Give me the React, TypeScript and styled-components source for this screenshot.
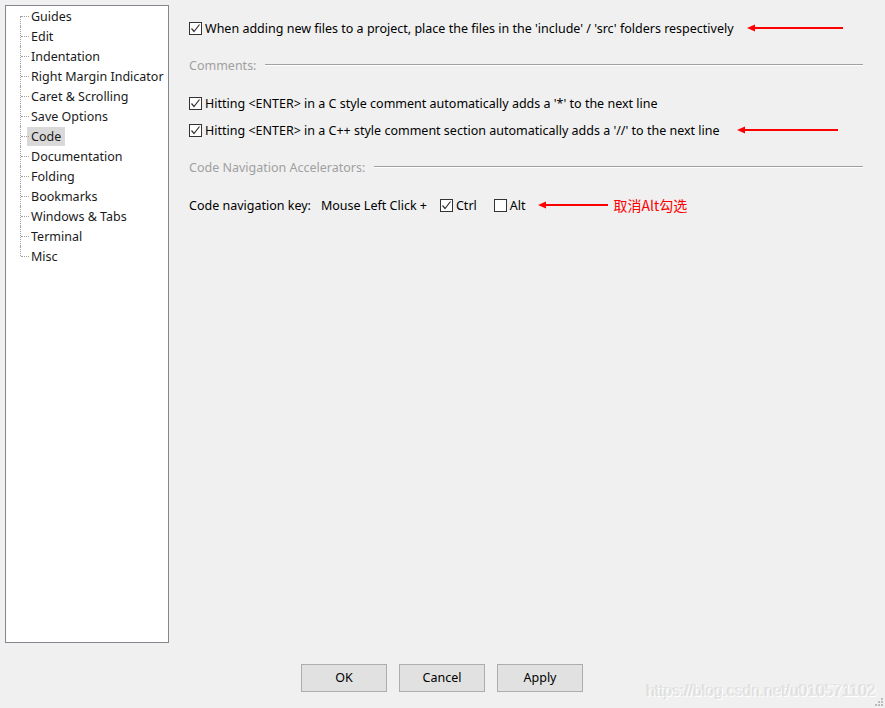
import React from "react";
import styled, { createGlobalStyle } from "styled-components";

const GlobalStyle = createGlobalStyle`
    html, body {
        margin: 0;
        padding: 0;
        background: #f0f0f0;
        font-family: "Noto Sans", "Noto Sans CJK SC", sans-serif;
        font-size: 12.5px;
        color: #000;
    }
`;

const Window = styled.div`
    width: 885px;
    height: 708px;
    display: flex;
    flex-direction: column;
    background: #f0f0f0;
    position: relative;
    overflow: hidden;
`;

const Main = styled.div`
    display: flex;
    flex: 1;
    padding: 5px 0 0 5px;
`;

const TreePanel = styled.div`
    width: 162px;
    height: 636px;
    border: 1px solid #828790;
    background: #fff;
`;

const TreeList = styled.ul`
    list-style: none;
    margin: 0;
    padding: 0;
`;

const TreeItem = styled.li<{ $first?: boolean; $last?: boolean }>`
    position: relative;
    height: 20px;
    display: flex;
    align-items: center;
    padding-left: 21px;

    &::before {
        content: "";
        position: absolute;
        left: 14px;
        top: ${p => (p.$first ? "10px" : "0")};
        height: ${p => (p.$first || p.$last ? "10px" : "20px")};
        border-left: 1px dotted #a0a0a0;
    }
    &::after {
        content: "";
        position: absolute;
        left: 15px;
        top: 10px;
        width: 8px;
        border-top: 1px dotted #a0a0a0;
    }
`;

const TreeLabel = styled.span<{ $selected?: boolean }>`
    padding: 0 4px;
    line-height: 19px;
    background: ${p => (p.$selected ? "#d9d9d9" : "transparent")};
    color: #1a1a1a;
    white-space: nowrap;
`;

const Content = styled.div`
    flex: 1;
    padding: 0 22px 0 20px;
    display: flex;
    flex-direction: column;
`;

const Row = styled.div<{ $top: number }>`
    display: flex;
    align-items: center;
    height: 20px;
    margin-top: ${p => p.$top}px;
    white-space: nowrap;
`;

const Box = styled.span`
    width: 11px;
    height: 11px;
    border: 1px solid #333;
    background: #fff;
    display: inline-flex;
    align-items: center;
    justify-content: center;
    margin-right: 3px;
    flex-shrink: 0;
`;

const GroupHeader = styled.div<{ $top: number }>`
    display: flex;
    align-items: center;
    height: 20px;
    margin-top: ${p => p.$top}px;
    color: #a0a0a0;
    white-space: nowrap;
`;

const GroupRule = styled.div`
    flex: 1;
    margin-left: 9px;
    border-top: 1px solid #a0a0a0;
    border-bottom: 1px solid #fff;
`;

const Label = styled.span<{ $gap?: number }>`
    margin-right: ${p => p.$gap ?? 0}px;
`;

const Note = styled.span`
    color: #ff0000;
    font-family: "Noto Sans CJK SC", sans-serif;
    font-size: 14px;
    margin-left: 6px;
`;

const Footer = styled.div`
    height: 66px;
    display: flex;
    justify-content: center;
    gap: 12px;
    padding: 21px 1px 0 0;
    box-sizing: border-box;
`;

const Button = styled.button`
    width: 86px;
    height: 28px;
    background: #e1e1e1;
    border: 1px solid #adadad;
    font-family: inherit;
    font-size: 12.5px;
    color: #000;
    padding: 0 0 2px;
`;

const Watermark = styled.div`
    position: absolute;
    right: 9px;
    bottom: 8px;
    font-family: "Liberation Sans", sans-serif;
    font-size: 15.6px;
    color: #e6e6e6;
    text-shadow: 1px 1px 0 #fff, -1px 0 0 #d8d8d8;
`;

const Grip = styled.svg`
    position: absolute;
    right: 1px;
    bottom: 1px;
`;

const Check = () => (
    <svg width="11" height="11" viewBox="0 0 11 11">
        <path d="M1.5 5.5 L4 8.5 L9.5 1.5" fill="none" stroke="#333" strokeWidth="1.2" />
    </svg>
);

const Arrow = ({ length, gap }: { length: number; gap: number }) => (
    <svg width={length} height="8" viewBox={`0 0 ${length} 8`} style={{ marginLeft: gap }}>
        <polygon points="0,4 8,0.5 8,7.5" fill="#ff0000" />
        <rect x="6" y="3" width={length - 6} height="2" fill="#ff0000" />
    </svg>
);

const items = [
    "Guides",
    "Edit",
    "Indentation",
    "Right Margin Indicator",
    "Caret & Scrolling",
    "Save Options",
    "Code",
    "Documentation",
    "Folding",
    "Bookmarks",
    "Windows & Tabs",
    "Terminal",
    "Misc",
];

export default function App() {
    return (
        <Window>
            <GlobalStyle />
            <Main>
                <TreePanel>
                    <TreeList>
                        {items.map((name, i) => (
                            <TreeItem key={name} $first={i === 0} $last={i === items.length - 1}>
                                <TreeLabel $selected={name === "Code"}>{name}</TreeLabel>
                            </TreeItem>
                        ))}
                    </TreeList>
                </TreePanel>
                <Content>
                    <Row $top={13}>
                        <Box><Check /></Box>
                        <Label>When adding new files to a project, place the files in the 'include' / 'src' folders respectively</Label>
                        <Arrow length={96} gap={13} />
                    </Row>
                    <GroupHeader $top={17}>
                        Comments:
                        <GroupRule />
                    </GroupHeader>
                    <Row $top={18}>
                        <Box><Check /></Box>
                        <Label>Hitting &lt;ENTER&gt; in a C style comment automatically adds a '*' to the next line</Label>
                    </Row>
                    <Row $top={7}>
                        <Box><Check /></Box>
                        <Label>Hitting &lt;ENTER&gt; in a C++ style comment section automatically adds a '//' to the next line</Label>
                        <Arrow length={101} gap={17} />
                    </Row>
                    <GroupHeader $top={17}>
                        Code Navigation Accelerators:
                        <GroupRule />
                    </GroupHeader>
                    <Row $top={18}>
                        <Label $gap={10}>Code navigation key:</Label>
                        <Label $gap={13}>Mouse Left Click +</Label>
                        <Box><Check /></Box>
                        <Label $gap={17}>Ctrl</Label>
                        <Box />
                        <Label>Alt</Label>
                        <Arrow length={70} gap={12} />
                        <Note>取消Alt勾选</Note>
                    </Row>
                </Content>
            </Main>
            <Footer>
                <Button>OK</Button>
                <Button>Cancel</Button>
                <Button>Apply</Button>
            </Footer>
            <Watermark>https://blog.csdn.net/u010571102</Watermark>
            <Grip width="10" height="10" viewBox="0 0 10 10">
                <rect x="7" y="1" width="2" height="2" fill="#bbb" />
                <rect x="4" y="4" width="2" height="2" fill="#bbb" />
                <rect x="7" y="4" width="2" height="2" fill="#bbb" />
                <rect x="1" y="7" width="2" height="2" fill="#bbb" />
                <rect x="4" y="7" width="2" height="2" fill="#bbb" />
                <rect x="7" y="7" width="2" height="2" fill="#bbb" />
            </Grip>
        </Window>
    );
}
